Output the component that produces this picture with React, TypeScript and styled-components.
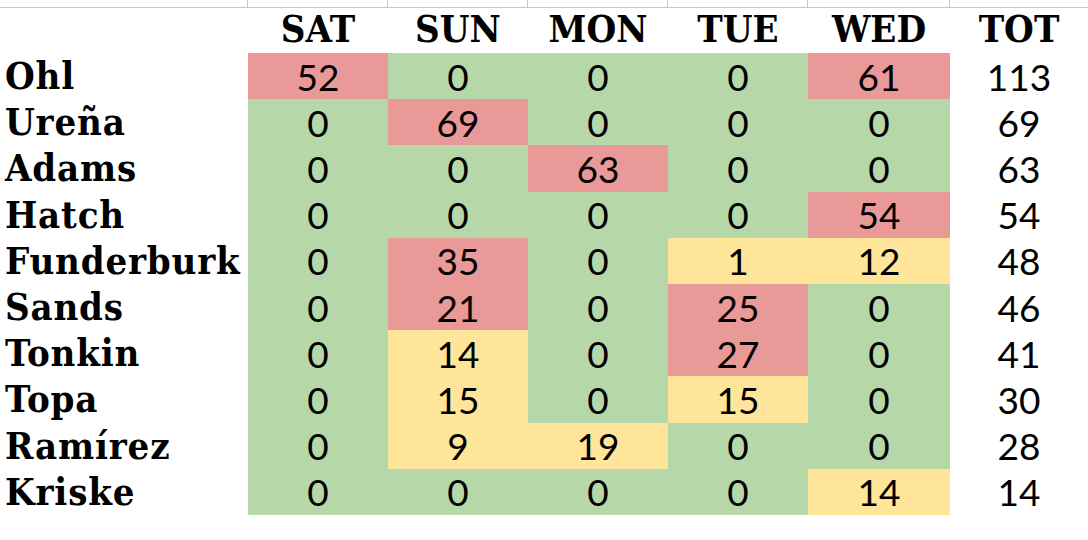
import React from 'react'
import styled, { createGlobalStyle } from 'styled-components'

const GlobalStyle = createGlobalStyle`
  html, body {
    margin: 0;
    padding: 0;
    background: #ffffff;
  }
`

type Row = { name: string; values: number[] }

const days = ['SAT', 'SUN', 'MON', 'TUE', 'WED']

const rows: Row[] = [
  { name: 'Ohl', values: [52, 0, 0, 0, 61] },
  { name: 'Ureña', values: [0, 69, 0, 0, 0] },
  { name: 'Adams', values: [0, 0, 63, 0, 0] },
  { name: 'Hatch', values: [0, 0, 0, 0, 54] },
  { name: 'Funderburk', values: [0, 35, 0, 1, 12] },
  { name: 'Sands', values: [0, 21, 0, 25, 0] },
  { name: 'Tonkin', values: [0, 14, 0, 27, 0] },
  { name: 'Topa', values: [0, 15, 0, 15, 0] },
  { name: 'Ramírez', values: [0, 9, 19, 0, 0] },
  { name: 'Kriske', values: [0, 0, 0, 0, 14] },
]

type Tone = 'none' | 'low' | 'high'

// 0 = green, under 20 = yellow, 20+ = red
const toneOf = (v: number): Tone => (v === 0 ? 'none' : v < 20 ? 'low' : 'high')

const toneColors: Record<Tone, string> = {
  none: '#b6d7a8',
  low: '#ffe599',
  high: '#ea9999',
}

const columns = '248px 140px 140px 140px 140px 142px 1fr'

const Sheet = styled.div`
  width: 1088px;
  height: 540px;
  overflow: hidden;
  background: #fff;
`

const TopStrip = styled.div`
  display: grid;
  grid-template-columns: ${columns};
  height: 7px;
  border-bottom: 1px solid #c6c6c6;
`

const StripCell = styled.div<{ $first?: boolean }>`
  border-left: ${(p) => (p.$first ? 'none' : '1px solid #c6c6c6')};
  margin-left: -1px;
`

const Table = styled.div`
  display: grid;
  grid-template-columns: ${columns};
  grid-template-rows: 45px repeat(10, 46.2px);
`

const slab = `'DejaVu Serif Condensed', 'DejaVu Serif', serif`

const Head = styled.div`
  display: flex;
  align-items: flex-end;
  justify-content: center;
  padding-bottom: 5px;
  font-family: ${slab};
  font-weight: 700;
  font-size: 38px;
  line-height: 1;
  color: #000;
`

const Name = styled.div`
  display: flex;
  align-items: center;
  padding-left: 5px;
  font-family: ${slab};
  font-weight: 700;
  font-size: 38px;
  letter-spacing: 0.8px;
  line-height: 1;
  color: #000;
  white-space: nowrap;
`

const Cell = styled.div<{ $tone?: Tone }>`
  display: flex;
  align-items: center;
  justify-content: center;
  background: ${(p) => (p.$tone ? toneColors[p.$tone] : 'transparent')};
  font-family: Lato, 'Liberation Sans', sans-serif;
  font-size: 37px;
  line-height: 1;
  color: #000;
`

export default function App() {
  return (
    <Sheet>
      <GlobalStyle />
      <TopStrip>
        {Array.from({ length: 7 }).map((_, i) => (
          <StripCell key={i} $first={i === 0} />
        ))}
      </TopStrip>
      <Table>
        <div />
        {days.map((d) => (
          <Head key={d}>{d}</Head>
        ))}
        <Head>TOT</Head>
        {rows.map((r) => (
          <React.Fragment key={r.name}>
            <Name>{r.name}</Name>
            {r.values.map((v, i) => (
              <Cell key={i} $tone={toneOf(v)}>
                {v}
              </Cell>
            ))}
            <Cell>{r.values.reduce((a, b) => a + b, 0)}</Cell>
          </React.Fragment>
        ))}
      </Table>
    </Sheet>
  )
}
